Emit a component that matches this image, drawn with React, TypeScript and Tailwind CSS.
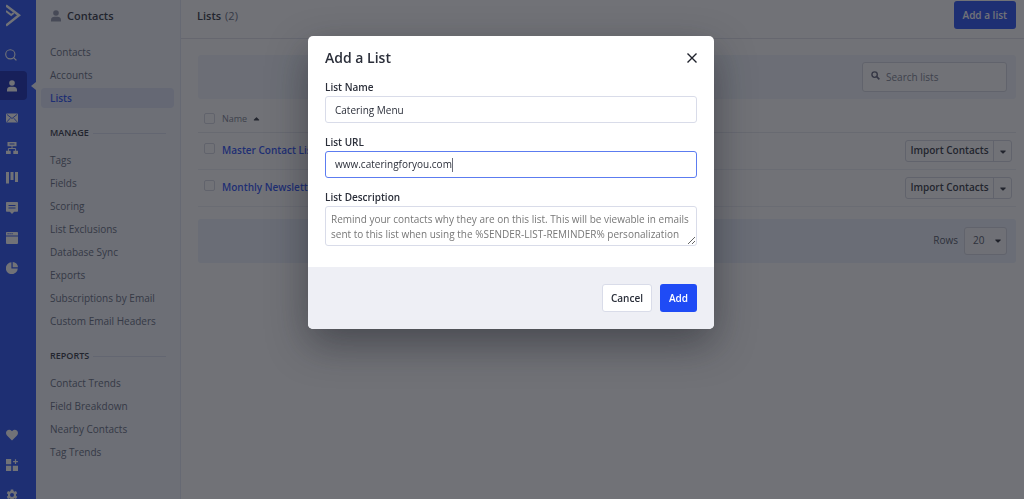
import type { ReactNode } from "react";

type IconProps = { className?: string };

function UserIcon({ className }: IconProps) {
  return (
    <svg viewBox="0 0 12 12" className={className} fill="currentColor" aria-hidden="true">
      <circle cx="6" cy="3" r="2.8" />
      <path d="M1 11.6V10c0-2 1.6-3.2 3.4-3.2h3.2C9.400 6.800 11 8 11 10v1.600z" />
    </svg>
  );
}

function CaretIcon({ className }: IconProps) {
  return (
    <svg viewBox="0 0 6 4" className={className} fill="currentColor" aria-hidden="true">
      <path d="M.6.5h4.800c.4 0 .5.400.3.700L3.400 3.500c-.2.200-.6.200-.8 0L.3 1.200C.1.900.2.500.6.500z" />
    </svg>
  );
}

const railIcons: { label: string; drawing: ReactNode }[] = [
  {
    label: "Campaigns",
    drawing: (
      <>
        <rect x="0" y="1.500" width="12" height="9" rx="1" fill="currentColor" />
        <path
          d="M1 2.500l5 4 5-4M1 9.800l3.200-3.600M11 9.800L7.800 6.200"
          fill="none"
          stroke="#1f4bf5"
          strokeWidth="0.900"
        />
      </>
    ),
  },
  {
    label: "Automations",
    drawing: (
      <>
        <path
          fillRule="evenodd"
          fill="currentColor"
          d="M1.500 0h9v4.300h-9zM3.500 1.600v1h5v-1zM0 8.800h4.700V12H0zM7.300 8.800H12V12H7.300z"
        />
        <path d="M6 4v2.300M2.400 9V6.500h7.200V9" fill="none" stroke="currentColor" />
      </>
    ),
  },
  {
    label: "Deals",
    drawing: (
      <path fill="currentColor" d="M0 0h3v11.500H0zM4.500 0h3v8h-3zM9 0h3v10H9z" />
    ),
  },
  {
    label: "Conversations",
    drawing: (
      <path
        fillRule="evenodd"
        fill="currentColor"
        d="M.8 0h10.400a.8.8 0 0 1 .8.800v8.200a.8.8 0 0 1-.8.800H8.200L6 12 3.800 9.800h-3A.8.8 0 0 1 0 9V.8A.8.8 0 0 1 .8 0zM2.500 3v1h7V3zM2.500 5.600v1h7v-1z"
      />
    ),
  },
  {
    label: "Site",
    drawing: (
      <path
        fillRule="evenodd"
        fill="currentColor"
        d="M.8 0h10.400a.8.8 0 0 1 .8.800V3.500H0V.8A.8.8 0 0 1 .8 0zM1.500 1.300v1h1.200v-1zM3.500 1.300v1h1.200v-1zM5.500 1.300v1h1.200v-1zM0 4.600h12V11a1 1 0 0 1-1 1H1a1 1 0 0 1-1-1z"
      />
    ),
  },
  {
    label: "Reports",
    drawing: (
      <path
        fill="currentColor"
        d="M5.400.2v6.400h6.400A6 6 0 1 1 5.400.2zM6.700 0A5.500 5.500 0 0 1 12 5.300H6.700z"
      />
    ),
  },
];

const bottomIcons: { label: string; drawing: ReactNode }[] = [
  {
    label: "Favorites",
    drawing: (
      <path
        fill="currentColor"
        d="M6 11.500L1 6.400C-.3 5-.3 3 .9 1.700 2.200.4 4.300.4 5.500 1.700L6 2.200l.5-.5c1.200-1.300 3.300-1.300 4.600 0 1.200 1.300 1.200 3.300-.1 4.700z"
      />
    ),
  },
  {
    label: "Apps",
    drawing: (
      <path
        fill="currentColor"
        d="M0 0h5.200v5.200H0zM0 6.800h5.200V12H0zM6.800 6.800H12V12H6.800zM8.900.3h1.200v1.800h1.800v1.200h-1.800v1.800H8.900V3.300H7.100V2.100h1.800z"
      />
    ),
  },
  {
    label: "Settings",
    drawing: (
      <path
        fillRule="evenodd"
        fill="currentColor"
        d="M4.800.5h2.400l.3 1.600 1 .6 1.500-.6 1.200 2.100L10 5.300v1.400l1.200 1.100L10 9.900l-1.500-.6-1 .6-.3 1.600H4.800l-.3-1.600-1-.6-1.500.6L.8 7.800 2 6.700V5.300L.8 4.200 2 2.100l1.500.6 1-.6zM6 4a2 2 0 1 0 0 4 2 2 0 0 0 0-4z"
      />
    ),
  },
];

function RailLink({ label, drawing }: { label: string; drawing: ReactNode }) {
  return (
    <a href="#" aria-label={label} className="flex h-[30px] w-6 items-center justify-center">
      <svg viewBox="0 0 12 12" className="h-3 w-3">
        {drawing}
      </svg>
    </a>
  );
}

function Rail() {
  return (
    <nav aria-label="Main" className="flex w-9 shrink-0 flex-col overflow-hidden bg-[#1f4bf5] text-white">
      <a href="#" aria-label="Home" className="mt-1 ml-1.5 block">
        <svg viewBox="0 0 15 23" className="h-[23px] w-[15px]" fill="none" stroke="currentColor">
          <path d="M0 1.500l13 9.800L0 21.500" strokeWidth="2.400" />
          <path d="M0 7l5.200 4 2.500-2" strokeWidth="1.800" />
        </svg>
      </a>
      <a href="#" aria-label="Search" className="mt-[13px] flex h-[30px] items-center pl-[5px]">
        <svg viewBox="0 0 12 12" className="h-3 w-3" fill="none" stroke="currentColor">
          <circle cx="5.300" cy="5.300" r="4.600" strokeWidth="1.100" />
          <path d="M8.600 8.600l2.800 2.800" strokeWidth="1.300" />
        </svg>
      </a>
      <div className="mt-px flex items-center justify-between">
        <a
          href="#"
          aria-label="Contacts"
          className="flex h-[29px] w-[27px] items-center rounded-r bg-[#0b22b0] pl-1.5"
        >
          <UserIcon className="h-3 w-3" />
        </a>
        <svg viewBox="0 0 5 8" className="h-2 w-[5px] text-[#f3f6fd]" fill="currentColor" aria-hidden="true">
          <path d="M5 0v8L0 4z" />
        </svg>
      </div>
      <div className="mt-[3px] flex flex-col">
        {railIcons.map((icon) => (
          <RailLink key={icon.label} {...icon} />
        ))}
      </div>
      <div className="mt-auto -mb-[11px] flex flex-col">
        {bottomIcons.map((icon) => (
          <RailLink key={icon.label} {...icon} />
        ))}
      </div>
    </nav>
  );
}

function MenuGroup({ items, active }: { items: string[]; active?: string }) {
  return (
    <ul className="flex flex-col gap-[3px]">
      {items.map((item) => (
        <li key={item}>
          <a
            href="#"
            className={
              item === active
                ? "flex h-5 items-center rounded bg-[#dde3f6] px-[9px] font-semibold text-[#1f4bf5]"
                : "flex h-5 items-center px-[9px] text-[#5d6678]"
            }
          >
            {item}
          </a>
        </li>
      ))}
    </ul>
  );
}

function MenuHeading({ children }: { children: ReactNode }) {
  return (
    <h2 className="mr-2 mb-2 ml-[9px] flex h-[18px] items-center gap-1 text-[9px] font-semibold text-[#2b2f3a]">
      {children}
      <span className="h-px flex-1 bg-[#d9dfee]" />
    </h2>
  );
}

function Sidebar() {
  return (
    <aside className="w-[145px] shrink-0 overflow-hidden border-r border-[#e2e7f3] bg-[#f3f6fd] pr-1.5 pl-[5px]">
      <h1 className="flex h-8 items-center gap-[5px] pl-[9px] text-[11px] font-semibold text-[#2b2f3a]">
        <UserIcon className="h-3 w-3 text-[#8d94a8]" />
        Contacts
      </h1>
      <nav aria-label="Contacts" className="mt-[10px] flex flex-col">
        <MenuGroup items={["Contacts", "Accounts", "Lists"]} active="Lists" />
        <div className="mt-4">
          <MenuHeading>MANAGE</MenuHeading>
          <MenuGroup
            items={[
              "Tags",
              "Fields",
              "Scoring",
              "List Exclusions",
              "Database Sync",
              "Exports",
              "Subscriptions by Email",
              "Custom Email Headers",
            ]}
          />
        </div>
        <div className="mt-4">
          <MenuHeading>REPORTS</MenuHeading>
          <MenuGroup items={["Contact Trends", "Field Breakdown", "Nearby Contacts", "Tag Trends"]} />
        </div>
      </nav>
    </aside>
  );
}

function Checkbox({ label }: { label: string }) {
  return (
    <input
      type="checkbox"
      aria-label={label}
      className="block h-[11px] w-[11px] appearance-none rounded-xs border border-[#d3d6e0] bg-white"
    />
  );
}

function ListRow({ name }: { name: string }) {
  return (
    <tr className="h-[37px] border-b border-[#eceef4]">
      <td className="w-6 pb-1 pl-1.5">
        <Checkbox label={`Select ${name}`} />
      </td>
      <td>
        <a href="#" className="font-semibold text-[#1f4bf5]">
          {name}
        </a>
      </td>
      <td className="pr-1">
        <div className="ml-auto flex h-[22px] w-[107px] rounded-[3px] border border-[#d3d6e0] font-semibold text-[#2b2f3a]">
          <button type="button" className="flex-1 whitespace-nowrap">
            Import Contacts
          </button>
          <button
            type="button"
            aria-label={`More actions for ${name}`}
            className="flex w-[18px] items-center justify-center border-l border-[#d3d6e0] pt-0.5"
          >
            <CaretIcon className="h-1 w-1.5" />
          </button>
        </div>
      </td>
    </tr>
  );
}

function Lists() {
  return (
    <main className="min-w-0 flex-1 bg-white">
      <header className="flex h-[39px] items-start justify-between border-b border-[#e0e2ea] pr-2 pl-4">
        <h1 className="flex h-8 items-center gap-1 text-[11px] font-semibold text-[#2b2f3a]">
          Lists <span className="font-normal text-[#5d6678]">(2)</span>
        </h1>
        <button type="button" className="mt-px h-7 rounded-[3px] bg-[#1f4bf5] px-[9px] font-semibold text-white">
          Add a list
        </button>
      </header>
      <div className="pt-4 pr-2 pl-[17px]">
        <div className="flex h-11 items-center justify-end rounded-[3px] bg-[#f1f5fc] pr-[9px]">
          <label className="flex h-[30px] w-[145px] items-center gap-1.5 rounded-[3px] border border-[#d3d6e0] bg-white pl-2">
            <svg viewBox="0 0 10 10" className="mb-1 h-[9px] w-[9px] shrink-0 text-[#5b5c74]" fill="none" stroke="currentColor">
              <circle cx="4" cy="4" r="3" strokeWidth="1.500" />
              <path d="M6.300 6.300L9.300 9.300" strokeWidth="1.800" />
            </svg>
            <input
              type="search"
              aria-label="Search lists"
              placeholder="Search lists"
              className="w-full min-w-0 bg-transparent outline-none placeholder:text-[#767c8c]"
            />
          </label>
        </div>
        <table className="mt-[7px] w-full border-collapse">
          <thead>
            <tr className="h-[26px] border-b border-[#e6e8ef]">
              <th className="w-6 pl-1.5">
                <Checkbox label="Select all lists" />
              </th>
              <th className="text-left text-[9px] font-normal text-[#767c8c]" colSpan={2}>
                <button type="button" className="flex items-center gap-1.5">
                  Name
                  <CaretIcon className="h-1 w-[7px] rotate-180 text-[#2b2f3a]" />
                </button>
              </th>
            </tr>
          </thead>
          <tbody>
            <ListRow name="Master Contact List" />
            <ListRow name="Monthly Newsletter" />
          </tbody>
        </table>
        <div className="mt-3 flex h-11 items-center justify-end gap-1.5 rounded-[3px] bg-[#ebf1fb] pr-[9px] text-[#4a5060]">
          <label htmlFor="rows">Rows</label>
          <div className="grid items-center">
            <select
              id="rows"
              className="col-start-1 row-start-1 h-7 w-[43px] appearance-none rounded-[3px] border border-[#d3d6e0] bg-[#f8f9fc] pl-2"
            >
              <option>20</option>
            </select>
            <CaretIcon className="pointer-events-none col-start-1 row-start-1 mr-1.5 h-1 w-1.5 justify-self-end text-[#1e212b]" />
          </div>
        </div>
      </div>
    </main>
  );
}

function AddListDialog() {
  return (
    <div className="fixed inset-0 flex items-start justify-center bg-[#1e2028]/63 pt-9 pr-0.5">
      <form
        role="dialog"
        aria-modal="true"
        aria-labelledby="dialog-title"
        className="w-full max-w-[406px] overflow-hidden rounded-[5px] bg-white text-[#2b2f3a] shadow-[0_15px_40px_rgba(20,22,30,0.45)]"
      >
        <div className="px-[17px] pt-3 pb-[21px]">
          <div className="flex h-5 items-center justify-between">
            <h2 id="dialog-title" className="text-[14px] leading-5 font-semibold">
              Add a List
            </h2>
            <button type="button" aria-label="Close">
              <svg viewBox="0 0 10 10" className="h-2.5 w-2.5" stroke="#1e212b" strokeWidth="1.400">
                <path d="M.5.5l9 9M9.500.5l-9 9" />
              </svg>
            </button>
          </div>
          <label htmlFor="list-name" className="mt-[11px] mb-px flex h-4 items-center font-semibold">
            List Name
          </label>
          <input
            id="list-name"
            defaultValue="Catering Menu"
            className="block h-[27px] w-full rounded-[3px] border border-[#d9dce9] px-[9px] outline-none"
          />
          <label htmlFor="list-url" className="mt-[11px] mb-px flex h-4 items-center font-semibold">
            List URL
          </label>
          <div className="flex h-[27px] items-center rounded-[3px] border border-[#5c7cf0] px-[9px]">
            <input
              id="list-url"
              defaultValue="www.cateringforyou.com"
              className="field-sizing-content bg-transparent caret-transparent outline-none"
            />
            <span className="h-3.5 w-px bg-[#6b6e78]" />
          </div>
          <label htmlFor="list-description" className="mt-[11px] mb-px flex h-4 items-center font-semibold">
            List Description
          </label>
          <textarea
            id="list-description"
            placeholder="Remind your contacts why they are on this list. This will be viewable in emails sent to this list when using the %SENDER-LIST-REMINDER% personalization tag."
            className="block h-10 w-full resize overflow-hidden rounded-[3px] border border-[#d9dce9] pt-[5px] pl-[5px] leading-[15px] outline-none placeholder:text-[#777]"
          />
        </div>
        <footer className="flex justify-end gap-2 bg-[#eeeff5] px-[17px] pt-[17px] pb-[17px] font-semibold">
          <button type="button" className="h-7 rounded-[3px] border border-[#d9dce9] bg-white px-2">
            Cancel
          </button>
          <button type="submit" className="h-7 rounded-[3px] bg-[#1f4bf5] px-[9px] text-white">
            Add
          </button>
        </footer>
      </form>
    </div>
  );
}

export default function App() {
  return (
    <div className="flex h-screen overflow-hidden font-['Open_Sans','Noto_Sans',sans-serif] text-[10px]">
      <Rail />
      <Sidebar />
      <Lists />
      <AddListDialog />
    </div>
  );
}
